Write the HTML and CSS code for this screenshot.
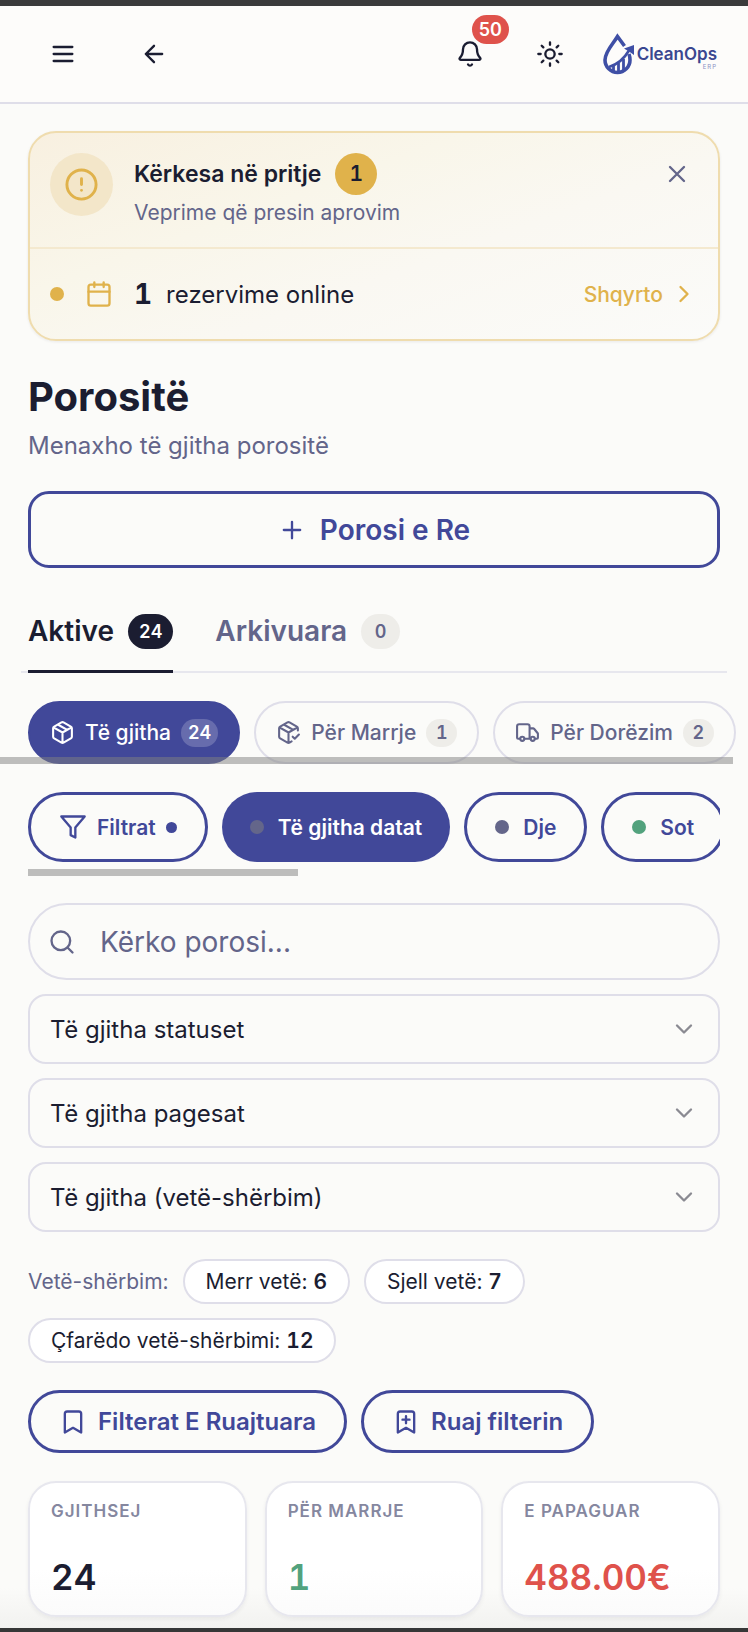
FILE: index.html
```html
<!DOCTYPE html>
<html lang="sq">
<head>
    <meta charset="UTF-8">
    <meta name="viewport" content="width=device-width, initial-scale=1.0">
    <title>Porositë - CleanOps ERP</title>
    <link rel="stylesheet" href="styles.css">
</head>
<body>
    <div class="page">
        <!-- Top bar -->
        <header class="topbar">
            <div class="topbar-group left">
                <button class="icon-btn" type="button" aria-label="Menu">
                    <svg class="icon" viewBox="0 0 24 24"><path d="M4 6h16M4 12h16M4 18h16"/></svg>
                </button>
                <button class="icon-btn" type="button" aria-label="Kthehu">
                    <svg class="icon" viewBox="0 0 24 24"><path d="m12 19-7-7 7-7M19 12H5"/></svg>
                </button>
            </div>
            <div class="topbar-group">
                <button class="icon-btn" type="button" aria-label="Njoftime">
                    <svg class="icon" viewBox="0 0 24 24"><path d="M10.300 21a2 2 0 0 0 3.400 0"/><path d="M3.300 15.300A1 1 0 0 0 4 17h16a1 1 0 0 0 .7-1.700C19.400 14 18 12.500 18 8A6 6 0 0 0 6 8c0 4.500-1.400 6-2.700 7.300"/></svg>
                    <span class="notify">50</span>
                </button>
                <button class="icon-btn" type="button" aria-label="Tema">
                    <svg class="icon" viewBox="0 0 24 24"><circle cx="12" cy="12" r="4"/><path d="M12 2v2M12 20v2M4.900 4.900l1.400 1.400M17.700 17.700l1.400 1.400M2 12h2M20 12h2M6.300 17.700l-1.400 1.400M19.100 4.900l-1.400 1.400"/></svg>
                </button>
                <a class="logo" href="#">
                    <svg class="logo-mark" viewBox="0 0 31 42">
                        <path d="M21.500 13 14.500 3.500C10 11 2 18.500 2 27a12.500 12.500 0 0 0 25 0c0-2.500-.3-4-1-6" fill="none" stroke="#3f4fa5" stroke-width="3.600"/>
                        <path d="M6 34C14 31.500 21 26 26 17.500" fill="none" stroke="#3f4fa5" stroke-width="2.600"/>
                        <path d="M21 15.500 31 12v10l-3.500-2.500z" fill="#3f4fa5"/>
                        <path d="M10.500 33v5M15.500 30v10M20.500 26v12" fill="none" stroke="#3f4fa5" stroke-width="2.800"/>
                    </svg>
                    <span class="logo-text">
                        <span class="logo-name">CleanOps</span>
                        <span class="logo-sub">ERP</span>
                    </span>
                </a>
            </div>
        </header>

        <main class="content">
            <!-- Pending requests -->
            <section class="alert">
                <div class="alert-head">
                    <span class="alert-icon">
                        <svg class="icon alert-mark" viewBox="0 0 24 24"><circle cx="12" cy="12" r="10"/><path d="M12 8v4M12 16h.01"/></svg>
                    </span>
                    <div class="alert-text">
                        <h2>Kërkesa në pritje <span class="alert-count">1</span></h2>
                        <p>Veprime që presin aprovim</p>
                    </div>
                    <button class="close-btn" type="button" aria-label="Mbyll">
                        <svg class="icon" viewBox="0 0 24 24"><path d="M18 6 6 18M6 6l12 12"/></svg>
                    </button>
                </div>
                <a class="alert-row" href="#">
                    <span class="dot amber"></span>
                    <svg class="icon cal" viewBox="0 0 24 24"><path d="M8 2v4M16 2v4M3 10h18"/><rect x="3" y="4" width="18" height="18" rx="2"/></svg>
                    <strong>1</strong>
                    <span class="alert-label">rezervime online</span>
                    <span class="review">Shqyrto</span>
                    <svg class="icon go" viewBox="0 0 24 24"><path d="m9 18 6-6-6-6"/></svg>
                </a>
            </section>

            <h1>Porositë</h1>
            <p class="subtitle">Menaxho të gjitha porositë</p>

            <button class="new-order" type="button">
                <svg class="icon" viewBox="0 0 24 24"><path d="M5 12h14M12 5v14"/></svg>
                Porosi e Re
            </button>

            <nav class="tabs">
                <button class="tab active" type="button">Aktive <span class="tab-count">24</span></button>
                <button class="tab" type="button">Arkivuara <span class="tab-count">0</span></button>
            </nav>

            <!-- Status chips -->
            <div class="chips-wrap">
                <div class="chips">
                    <button class="chip active" type="button">
                        <svg class="icon" viewBox="0 0 24 24"><path d="M11 21.700a2 2 0 0 0 2 0l7-4A2 2 0 0 0 21 16V8a2 2 0 0 0-1-1.700l-7-4a2 2 0 0 0-2 0l-7 4A2 2 0 0 0 3 8v8a2 2 0 0 0 1 1.700zM12 22V12M3.300 7 12 12l8.700-5M7.500 4.300l9 5.100"/></svg>
                        Të gjitha <span class="chip-count">24</span>
                    </button>
                    <button class="chip" type="button">
                        <svg class="icon" viewBox="0 0 24 24"><path d="m16 16 2 2 4-4"/><path d="M21 10V8a2 2 0 0 0-1-1.700l-7-4a2 2 0 0 0-2 0l-7 4A2 2 0 0 0 3 8v8a2 2 0 0 0 1 1.700l7 4a2 2 0 0 0 2 0l2-1.100M12 22V12M3.300 7 12 12l8.700-5M7.500 4.300l9 5.100"/></svg>
                        Për Marrje <span class="chip-count">1</span>
                    </button>
                    <button class="chip" type="button">
                        <svg class="icon" viewBox="0 0 24 24"><path d="M14 18V6a2 2 0 0 0-2-2H4a2 2 0 0 0-2 2v11a1 1 0 0 0 1 1h2M15 18H9M19 18h2a1 1 0 0 0 1-1v-3.700a1 1 0 0 0-.2-.6l-3.500-4.300a1 1 0 0 0-.8-.4H14"/><circle cx="17" cy="18" r="2"/><circle cx="7" cy="18" r="2"/></svg>
                        Për Dorëzim <span class="chip-count">2</span>
                    </button>
                </div>
                <div class="scroll-thumb wide"></div>
            </div>

            <!-- Date filters -->
            <div class="filters">
                <button class="pill-btn filter" type="button">
                    <svg class="icon" viewBox="0 0 24 24"><path d="M22 3H2l8 9.500V19l4 2v-8.500z"/></svg>
                    Filtrat <span class="dot small"></span>
                </button>
                <button class="pill-btn date active" type="button"><span class="dot slate"></span>Të gjitha datat</button>
                <button class="pill-btn date" type="button"><span class="dot slate"></span>Dje</button>
                <button class="pill-btn date" type="button"><span class="dot green"></span>Sot</button>
            </div>
            <div class="scroll-thumb"></div>

            <form class="search-form">
                <label class="search">
                    <svg class="icon" viewBox="0 0 24 24"><circle cx="11" cy="11" r="8"/><path d="m21 21-4.300-4.300"/></svg>
                    <input type="text" placeholder="Kërko porosi..." aria-label="Kërko porosi">
                </label>
                <label class="select">
                    <select aria-label="Statusi"><option>Të gjitha statuset</option></select>
                    <svg class="icon" viewBox="0 0 24 24"><path d="m6 9 6 6 6-6"/></svg>
                </label>
                <label class="select">
                    <select aria-label="Pagesa"><option>Të gjitha pagesat</option></select>
                    <svg class="icon" viewBox="0 0 24 24"><path d="m6 9 6 6 6-6"/></svg>
                </label>
                <label class="select">
                    <select aria-label="Vetë-shërbim"><option>Të gjitha (vetë-shërbim)</option></select>
                    <svg class="icon" viewBox="0 0 24 24"><path d="m6 9 6 6 6-6"/></svg>
                </label>
            </form>

            <div class="self-service">
                <span class="self-label">Vetë-shërbim:</span>
                <span class="tag">Merr vetë: <b>6</b></span>
                <span class="tag">Sjell vetë: <b>7</b></span>
                <span class="tag">Çfarëdo vetë-shërbimi: <b>12</b></span>
            </div>

            <div class="saved">
                <button class="pill-btn save" type="button">
                    <svg class="icon" viewBox="0 0 24 24"><path d="m19 21-7-4-7 4V5a2 2 0 0 1 2-2h10a2 2 0 0 1 2 2z"/></svg>
                    Filterat E Ruajtuara
                </button>
                <button class="pill-btn save" type="button">
                    <svg class="icon" viewBox="0 0 24 24"><path d="m19 21-7-4-7 4V5a2 2 0 0 1 2-2h10a2 2 0 0 1 2 2zM12 7v6M15 10H9"/></svg>
                    Ruaj filterin
                </button>
            </div>

            <!-- Totals -->
            <div class="stats">
                <div class="stat"><span class="stat-name">Gjithsej</span><span class="stat-value">24</span></div>
                <div class="stat"><span class="stat-name">Për marrje</span><span class="stat-value green-text">1</span></div>
                <div class="stat"><span class="stat-name">E papaguar</span><span class="stat-value red-text">488.00€</span></div>
            </div>
        </main>
    </div>
</body>
</html>
```

FILE: styles.css
```css
* {
    box-sizing: border-box;
}

body {
    margin: 0;
    background: #fbfbf9;
    color: #1b1d31;
    font-family: Inter, "Liberation Sans", sans-serif;
    font-size: 21px;
}

h1, h2, p {
    margin: 0;
}

button, input, select {
    font: inherit;
    color: inherit;
}

button {
    display: flex;
    align-items: center;
    padding: 0;
    border: none;
    background: none;
    white-space: nowrap;
    cursor: pointer;
}

a {
    color: inherit;
    text-decoration: none;
}

/* Counters keep equal digit widths */
.alert-count,
.alert-row strong,
.tab-count,
.chip-count,
.tag b,
.stat-value {
    font-variant-numeric: tabular-nums;
}

.page {
    min-height: 100vh;
    border-top: 6px solid #3b3b3b;
    border-bottom: 4px solid #363737;
    background: linear-gradient(to top, #f2f2f0, rgba(251, 251, 249, 0) 40px);
}

.icon {
    flex: none;
    width: 28px;
    height: 28px;
    fill: none;
    stroke: currentColor;
    stroke-width: 2;
    stroke-linecap: round;
    stroke-linejoin: round;
}

/* Top bar */
.topbar {
    display: flex;
    align-items: center;
    justify-content: space-between;
    height: 98px;
    padding: 0 31px 0 28px;
    border-bottom: 2px solid #dfdee9;
    background: #fdfcfa;
}

.topbar-group {
    display: flex;
    align-items: center;
    gap: 10px;
}

.topbar-group.left {
    gap: 21px;
}

.icon-btn {
    position: relative;
    justify-content: center;
    width: 70px;
    height: 70px;
}

.notify {
    position: absolute;
    top: -4px;
    left: 37px;
    padding: 0 7px;
    border-radius: 15px;
    background: #df524b;
    color: #fff;
    font-size: 18px;
    font-weight: 600;
    line-height: 29px;
}

.logo {
    display: flex;
    align-items: center;
    gap: 3px;
    margin-left: 8px;
    color: #3a4790;
}

.logo-mark {
    width: 31px;
    height: 42px;
}

.logo-text {
    display: flex;
    flex-direction: column;
    align-items: flex-end;
    padding-top: 8px;
}

.logo-name {
    font-size: 17px;
    font-weight: 600;
    line-height: 18px;
}

.logo-sub {
    color: #8a93c4;
    font-size: 6px;
    line-height: 8px;
    letter-spacing: 1px;
}

.content {
    padding: 27px 28px 11px;
}

/* Pending requests */
.alert {
    border: 2px solid #efdcae;
    border-radius: 28px;
    background: linear-gradient(160deg, #f8f0e0, #f9f6ea 35%, #faf8f2 60%, #fbfbf9);
    box-shadow: 0 1px 3px rgba(27, 29, 49, 0.08);
}

.alert-head {
    display: flex;
    align-items: flex-start;
    gap: 21px;
    padding: 20px 20px 18px;
    border-bottom: 2px solid #f4e9cf;
}

.alert-icon {
    display: flex;
    align-items: center;
    justify-content: center;
    width: 63px;
    height: 63px;
    border-radius: 50%;
    background: #f3e6c9;
    color: #e0b24b;
}

.alert-mark {
    width: 35px;
    height: 35px;
}

.alert-text {
    flex: 1;
}

.alert-text h2 {
    display: flex;
    align-items: center;
    gap: 14px;
    font-size: 23px;
    font-weight: 600;
}

.alert-count {
    width: 42px;
    border-radius: 50%;
    background: #e0b24b;
    font-size: 21px;
    line-height: 42px;
    text-align: center;
}

.alert-text p {
    margin-top: 2px;
    color: #63658a;
    line-height: 32px;
}

.close-btn {
    height: 42px;
    padding: 0 7px;
    color: #63658a;
}

.alert-row {
    display: flex;
    align-items: center;
    height: 90px;
    padding: 0 20px;
}

.dot {
    flex: none;
    width: 14px;
    height: 14px;
    border-radius: 50%;
    background: #414899;
}

.dot.amber {
    background: #e0b24b;
}

.dot.slate {
    background: #64668a;
}

.dot.green {
    background: #52a27d;
}

.dot.small {
    width: 11px;
    height: 11px;
}

.cal {
    margin: 0 21px;
    color: #e0b24b;
}

.alert-row strong {
    font-size: 28px;
}

.alert-label {
    flex: 1;
    margin-left: 14px;
    font-size: 24px;
}

.review {
    color: #e0b24b;
    font-weight: 500;
}

.go {
    margin-left: 7px;
    color: #e0b24b;
}

/* Page title */
h1 {
    margin-top: 28px;
    font-size: 40px;
    font-weight: 700;
    line-height: 56px;
}

.subtitle {
    margin-top: 3px;
    color: #63658a;
    font-size: 24px;
    line-height: 35px;
}

.new-order {
    justify-content: center;
    gap: 14px;
    width: 100%;
    height: 77px;
    margin-top: 28px;
    border: 3px solid #414899;
    border-radius: 21px;
    color: #414899;
    font-size: 28px;
    font-weight: 600;
}

/* Tabs */
.tabs {
    display: flex;
    gap: 42px;
    margin: 24px -7px 0;
    padding: 0 7px;
    border-bottom: 2px solid #e7e7ee;
}

.tab {
    gap: 14px;
    height: 81px;
    margin-bottom: -2px;
    border-bottom: 3px solid transparent;
    color: #63658a;
    font-size: 28px;
    font-weight: 600;
}

.tab.active {
    border-color: #1b1d31;
    color: #1b1d31;
}

.tab-count {
    min-width: 39px;
    padding: 0 11px;
    border-radius: 18px;
    background: #eeede9;
    font-size: 18px;
    line-height: 35px;
}

.tab.active .tab-count {
    background: #1b1d31;
    color: #fff;
}

/* Status chips */
.chips-wrap {
    position: relative;
    margin: 28px -28px 0;
}

.chips {
    display: flex;
    gap: 14px;
    padding: 0 10px 0 28px;
    overflow-x: auto;
    scrollbar-width: none;
}

.chip {
    flex: none;
    gap: 10px;
    height: 63px;
    padding: 0 20px;
    border: 2px solid #dfdee9;
    border-radius: 32px;
    color: #63658a;
    font-weight: 500;
}

.chip .icon {
    width: 25px;
    height: 25px;
}

.chip.active {
    border-color: #414899;
    background: #414899;
    color: #fff;
}

.chip-count {
    min-width: 31px;
    padding: 0 7px;
    border-radius: 14px;
    background: #eeede9;
    font-size: 18px;
    font-weight: 600;
    line-height: 28px;
    text-align: center;
}

.chip.active .chip-count {
    background: rgba(255, 255, 255, 0.2);
}

.scroll-thumb {
    width: 39%;
    height: 7px;
    margin-top: 7px;
    background: rgba(127, 127, 127, 0.5);
}

.scroll-thumb.wide {
    position: absolute;
    left: 0;
    bottom: 0;
    width: 98%;
}

/* Date filters */
.filters {
    display: flex;
    gap: 14px;
    margin-top: 28px;
    overflow-x: auto;
    scrollbar-width: none;
}

.pill-btn {
    flex: none;
    border: 3px solid #414899;
    border-radius: 35px;
    color: #414899;
    font-weight: 600;
}

.pill-btn.filter {
    gap: 10px;
    height: 70px;
    padding: 0 28px;
}

.pill-btn.date {
    gap: 14px;
    height: 70px;
    padding: 0 28px;
}

.pill-btn.active {
    border: none;
    background: #414899;
    color: #fff;
}

/* Search and drop-downs */
.search-form {
    display: grid;
    gap: 14px;
    margin-top: 27px;
}

.search {
    display: flex;
    align-items: center;
    gap: 24px;
    height: 77px;
    padding: 0 18px;
    border: 2px solid #dfdee9;
    border-radius: 39px;
    color: #63658a;
}

.search input {
    flex: 1;
    min-width: 0;
    padding: 0;
    border: none;
    outline: none;
    background: none;
    font-size: 28px;
}

.search input::placeholder {
    color: #63658a;
    opacity: 1;
}

.select {
    display: grid;
    align-items: center;
    height: 70px;
    border: 2px solid #dfdee9;
    border-radius: 18px;
}

.select select {
    grid-area: 1 / 1;
    height: 100%;
    padding: 0 20px;
    border: none;
    background: none;
    font-size: 24px;
    appearance: none;
}

.select .icon {
    grid-area: 1 / 1;
    justify-self: end;
    margin-right: 20px;
    color: #8a8a92;
    pointer-events: none;
}

/* Self service tags */
.self-service {
    display: flex;
    flex-wrap: wrap;
    align-items: center;
    gap: 14px;
    margin-top: 27px;
}

.self-label {
    color: #63658a;
}

.tag {
    padding: 0 21px;
    border: 2px solid #dfdee9;
    border-radius: 23px;
    background: #fff;
    line-height: 41px;
}

.tag b {
    font-weight: 600;
}

.saved {
    display: flex;
    flex-wrap: wrap;
    gap: 14px;
    margin-top: 27px;
}

.pill-btn.save {
    gap: 11px;
    height: 63px;
    padding: 0 28px;
    font-size: 24px;
}

/* Totals */
.stats {
    display: grid;
    grid-template-columns: repeat(3, 1fr);
    gap: 18px;
    margin-top: 28px;
}

.stat {
    display: flex;
    flex-direction: column;
    justify-content: space-between;
    height: 136px;
    padding: 18px 21px 17px;
    border: 2px solid #e7e7ee;
    border-radius: 28px;
    background: linear-gradient(#fff 65%, #fbfbfb);
    box-shadow: 0 2px 4px rgba(27, 29, 49, 0.06);
}

.stat-name {
    color: #85879f;
    font-size: 17px;
    font-weight: 600;
    line-height: 20px;
    letter-spacing: 1px;
    text-transform: uppercase;
}

.stat-value {
    font-size: 35px;
    font-weight: 600;
    line-height: 42px;
}

.green-text {
    color: #52a27d;
}

.red-text {
    color: #df524b;
}
```
